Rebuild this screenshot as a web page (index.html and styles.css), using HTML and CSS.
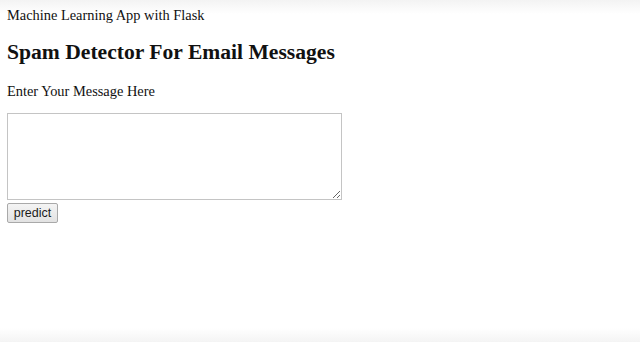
FILE: index.html
```html
<!DOCTYPE html>
<html lang="en">
<head>
    <meta charset="UTF-8">
    <title>Spam Detector</title>
    <link rel="stylesheet" href="styles.css">
</head>
<body>

<div class="app-title">Machine Learning App with Flask</div>

<form class="spam-form">
    <h2>Spam Detector For Email Messages</h2>
    <p>Enter Your Message Here</p>
    <textarea name="message"></textarea>
    <div class="actions">
        <button type="submit">predict</button>
    </div>
</form>

</body>
</html>
```

FILE: styles.css
```css
html {
    background: linear-gradient(#f3f3f3 0, #ffffff 14px, #ffffff 328px, #f4f4f4 342px);
    min-height: 100%;
}

body {
    margin: 7px;
    font-family: "Liberation Serif", "Times New Roman", serif;
    font-size: 14.4px;
    line-height: 16px;
    color: #111;
}

.app-title {
    margin: 0;
}

.spam-form h2 {
    margin: 16px 0 0;
    font-size: 21.6px;
    line-height: 26px;
    font-weight: bold;
}

.spam-form p {
    margin: 18px 0 0;
}

.spam-form textarea {
    display: block;
    box-sizing: border-box;
    width: 335px;
    height: 87px;
    margin: 14px 0 0;
    border: 1px solid #c4c4c4;
    background: #fff;
}

.spam-form .actions {
    margin-top: 3px;
}

.spam-form button {
    box-sizing: border-box;
    width: 51px;
    height: 20px;
    padding: 0;
    font-family: "Liberation Sans", Arial, sans-serif;
    font-size: 12.5px;
    color: #1a1a1a;
    background: linear-gradient(#f4f4f4, #e2e2e2);
    border: 1px solid #a9a9a9;
    border-radius: 2px;
}
```
